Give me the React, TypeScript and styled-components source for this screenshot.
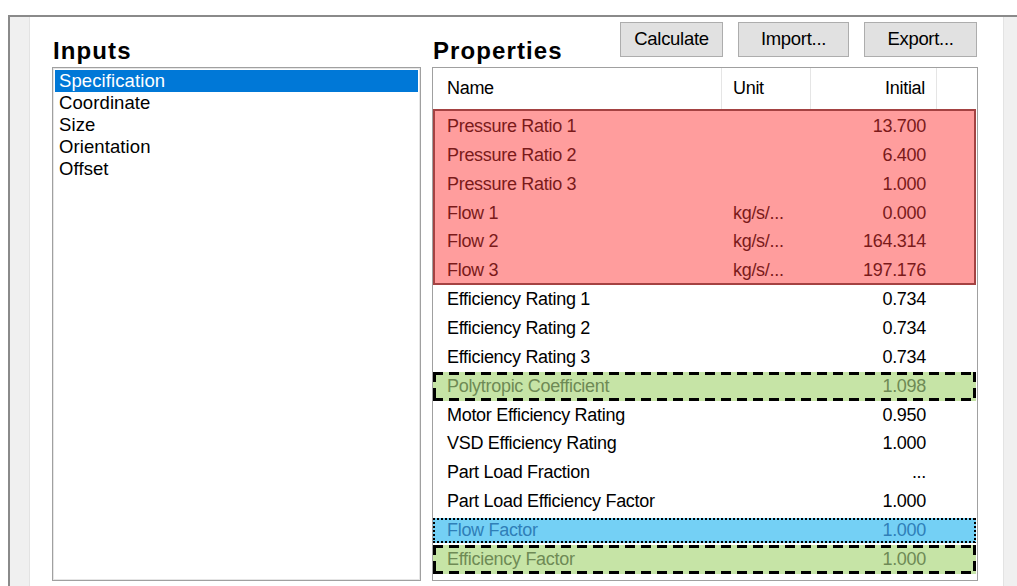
import React from "react";
import styled, { createGlobalStyle, css } from "styled-components";

const GlobalStyle = createGlobalStyle`
  html, body {
    margin: 0;
    padding: 0;
    background: #ffffff;
    overflow: hidden;
  }
  body {
    font-family: "Liberation Sans", Arial, sans-serif;
    color: #000;
  }
`;

type Tone = "plain" | "alert" | "derived" | "focus";

interface PropertyRow {
  name: string;
  unit?: string;
  value: string;
  tone: Tone;
}

const requiredRows: PropertyRow[] = [
  { name: "Pressure Ratio 1", value: "13.700", tone: "alert" },
  { name: "Pressure Ratio 2", value: "6.400", tone: "alert" },
  { name: "Pressure Ratio 3", value: "1.000", tone: "alert" },
  { name: "Flow 1", unit: "kg/s/...", value: "0.000", tone: "alert" },
  { name: "Flow 2", unit: "kg/s/...", value: "164.314", tone: "alert" },
  { name: "Flow 3", unit: "kg/s/...", value: "197.176", tone: "alert" },
];

const otherRows: PropertyRow[] = [
  { name: "Efficiency Rating 1", value: "0.734", tone: "plain" },
  { name: "Efficiency Rating 2", value: "0.734", tone: "plain" },
  { name: "Efficiency Rating 3", value: "0.734", tone: "plain" },
  { name: "Polytropic Coefficient", value: "1.098", tone: "derived" },
  { name: "Motor Efficiency Rating", value: "0.950", tone: "plain" },
  { name: "VSD Efficiency Rating", value: "1.000", tone: "plain" },
  { name: "Part Load Fraction", value: "...", tone: "plain" },
  { name: "Part Load Efficiency Factor", value: "1.000", tone: "plain" },
  { name: "Flow Factor", value: "1.000", tone: "focus" },
  { name: "Efficiency Factor", value: "1.000", tone: "derived" },
];

const inputs = ["Specification", "Coordinate", "Size", "Orientation", "Offset"];

const ROW_H = 28.87;
const COLUMNS = "289px 89px 126px 1fr";

// Long-dash outline for computed values, painted as four gradient strips.
const DASH_H = "repeating-linear-gradient(90deg, #000 0 10px, transparent 10px 16px)";
const DASH_V = "repeating-linear-gradient(180deg, #000 0 10px, transparent 10px 16px)";
// Square-dot outline for the focused row.
const DOT_H = "repeating-linear-gradient(90deg, #000 0 2px, transparent 2px 4px)";
const DOT_V = "repeating-linear-gradient(180deg, #000 0 2px, transparent 2px 4px)";

const Page = styled.div`
  box-sizing: border-box;
  height: 586px;
  padding: 15px 0 0 8px;
`;

const Frame = styled.div`
  box-sizing: border-box;
  display: flex;
  height: 571px;
  border-top: 2px solid #8a8a8a;
  border-left: 2px solid #8a8a8a;
`;

const Gutter = styled.div<{ $side: "left" | "right" }>`
  background: #f0f0f0;
  flex: none;
  ${({ $side }) =>
    $side === "left"
      ? css`
          width: 19px;
          border-right: 1px solid #e3e3e3;
        `
      : css`
          width: 13px;
          border-left: 1px solid #e3e3e3;
        `}
`;

const Content = styled.div`
  flex: 1;
  display: grid;
  grid-template-columns: 369px 546px;
  grid-template-rows: 45px 514px;
  column-gap: 11px;
  padding: 5px 0 0 22px;
  background: #ffffff;
`;

const Heading = styled.h2`
  margin: 0 0 4px 1px;
  align-self: end;
  font-size: 24px;
  line-height: 24px;
  font-weight: 700;
  letter-spacing: 1.1px;
  color: #000;
`;

const PropertiesBar = styled.div`
  display: flex;
  justify-content: space-between;
  align-items: flex-end;
`;

const ButtonRow = styled.div`
  display: flex;
  gap: 15px;
  align-self: flex-start;
  margin-right: 1px;
`;

const ActionButton = styled.button<{ $w: number }>`
  box-sizing: border-box;
  width: ${({ $w }) => $w}px;
  height: 35px;
  padding: 0 0 2px;
  background: #e1e1e1;
  border: 1px solid #adadad;
  border-radius: 0;
  font-family: "Liberation Sans", Arial, sans-serif;
  font-size: 18.5px;
  letter-spacing: -0.3px;
  color: #000;
`;

const ListBox = styled.ul`
  box-sizing: border-box;
  margin: 0;
  padding: 2px;
  list-style: none;
  border: 1px solid #a0a0a0;
  box-shadow: inset 0 0 0 1px #e6e6e6;
  background: #fff;
`;

const ListItem = styled.li<{ $selected?: boolean }>`
  height: 22px;
  line-height: 22px;
  padding-left: 4px;
  font-size: 18.5px;
  letter-spacing: 0.1px;
  white-space: nowrap;
  ${({ $selected }) =>
    $selected
      ? css`
          background: #0078d7;
          color: #fff;
        `
      : css`
          color: #000;
        `}
`;

const Table = styled.div`
  box-sizing: border-box;
  display: flex;
  flex-direction: column;
  border: 1px solid #a0a0a0;
  background: #fff;
  overflow: hidden;
`;

const HeaderRow = styled.div`
  display: grid;
  grid-template-columns: ${COLUMNS};
  height: 41px;
  flex: none;
`;

const HeaderCell = styled.div<{ $align?: "left" | "right"; $pad?: number }>`
  display: flex;
  align-items: center;
  justify-content: ${({ $align }) => ($align === "right" ? "flex-end" : "flex-start")};
  padding: 0 ${({ $align, $pad = 0 }) => ($align === "right" ? `${$pad}px` : "0")} 0
    ${({ $align, $pad = 0 }) => ($align === "right" ? "0" : `${$pad}px`)};
  border-right: 1px solid #e5e5e5;
  font-size: 18px;
  letter-spacing: -0.3px;
  color: #000;
`;

const HeaderFiller = styled.div``;

const AlertGroup = styled.div`
  margin-right: 1px;
  padding-top: 3px;
  background: #ff9d9d;
  box-shadow: inset 0 0 0 2px #a44242;
`;

const toneStyles: Record<Tone, ReturnType<typeof css>> = {
  plain: css`
    color: #000;
  `,
  alert: css`
    color: #7a1a1a;
  `,
  derived: css`
    color: #6e8a55;
    padding: 0 3px;
    background:
      ${DASH_H} left top / 100% 3px no-repeat,
      ${DASH_H} left bottom / 100% 3px no-repeat,
      ${DASH_V} left top / 3px 100% no-repeat,
      ${DASH_V} right top / 3px 100% no-repeat,
      #c6e4a6;
  `,
  focus: css`
    color: #2f7fb8;
    padding: 0 2px;
    height: ${ROW_H - 4}px;
    margin: 2px 1px 2px 0;
    background:
      ${DOT_H} left top / 100% 2px no-repeat,
      ${DOT_H} left bottom / 100% 2px no-repeat,
      ${DOT_V} left top / 2px 100% no-repeat,
      ${DOT_V} right top / 2px 100% no-repeat,
      #74d0f5;
  `,
};

const Row = styled.div<{ $tone: Tone }>`
  box-sizing: border-box;
  display: grid;
  grid-template-columns: ${COLUMNS};
  align-items: center;
  height: ${ROW_H}px;
  margin-right: 1px;
  font-size: 18px;
  letter-spacing: -0.3px;
  white-space: nowrap;
  ${({ $tone }) => toneStyles[$tone]}
`;

const NameCell = styled.span<{ $inset: number }>`
  padding-left: ${({ $inset }) => $inset}px;
`;

const UnitCell = styled.span<{ $inset: number }>`
  padding-left: ${({ $inset }) => $inset}px;
`;

const ValueCell = styled.span<{ $trim: number }>`
  text-align: right;
  padding-right: ${({ $trim }) => $trim}px;
`;

const PropertyLine: React.FC<{ row: PropertyRow }> = ({ row }) => {
  const edge = row.tone === "derived" ? 3 : row.tone === "focus" ? 2 : 0;
  return (
    <Row $tone={row.tone}>
      <NameCell $inset={14 - edge}>{row.name}</NameCell>
      <UnitCell $inset={11 - edge}>{row.unit ?? ""}</UnitCell>
      <ValueCell $trim={11 + edge}>{row.value}</ValueCell>
      <span />
    </Row>
  );
};

export default function App() {
  return (
    <>
      <GlobalStyle />
      <Page>
        <Frame>
          <Gutter $side="left" />
          <Content>
            <Heading>Inputs</Heading>
            <PropertiesBar>
              <Heading>Properties</Heading>
              <ButtonRow>
                <ActionButton $w={103}>Calculate</ActionButton>
                <ActionButton $w={111}>Import...</ActionButton>
                <ActionButton $w={113}>Export...</ActionButton>
              </ButtonRow>
            </PropertiesBar>

            <ListBox>
              {inputs.map((item, i) => (
                <ListItem key={item} $selected={i === 0}>
                  {item}
                </ListItem>
              ))}
            </ListBox>

            <Table>
              <HeaderRow>
                <HeaderCell $pad={14}>Name</HeaderCell>
                <HeaderCell $pad={11}>Unit</HeaderCell>
                <HeaderCell $align="right" $pad={11}>
                  Initial
                </HeaderCell>
                <HeaderFiller />
              </HeaderRow>
              <AlertGroup>
                {requiredRows.map((row) => (
                  <PropertyLine key={row.name} row={row} />
                ))}
              </AlertGroup>
              {otherRows.map((row) => (
                <PropertyLine key={row.name} row={row} />
              ))}
            </Table>
          </Content>
          <Gutter $side="right" />
        </Frame>
      </Page>
    </>
  );
}
